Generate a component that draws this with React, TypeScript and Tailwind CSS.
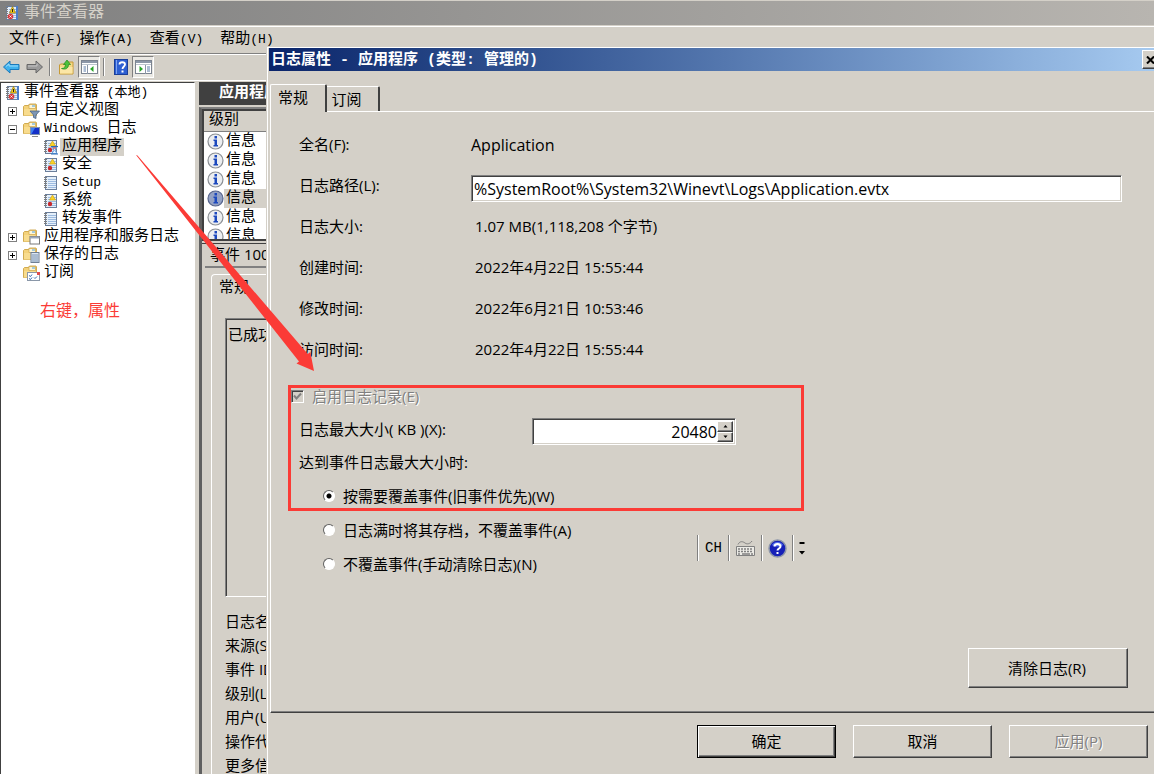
import { useState } from 'react';
import type { ReactNode } from 'react';
import clsx from 'clsx';

const RAISED =
  'border border-t-white border-l-white border-r-[#404040] border-b-[#404040] shadow-[inset_-1px_-1px_0_#808080] bg-[#d4d0c8]';
const SUNKEN =
  'border border-t-[#808080] border-l-[#808080] border-r-white border-b-white shadow-[inset_1px_1px_0_#404040,inset_-1px_-1px_0_#d4d0c8]';
const SONG = "font-['Liberation_Mono','Noto_Sans_CJK_SC',monospace]";
const YAHEI = "font-['Open_Sans','Noto_Sans_CJK_SC',sans-serif]";

type IconKind = 'root' | 'filter' | 'windows' | 'app' | 'alert' | 'plain' | 'services' | 'saved' | 'subscribe';

interface TreeNode {
  label: string;
  latin?: string;
  icon: IconKind;
  level: number;
  expander?: '+' | '-';
}

const tree: TreeNode[] = [
  { label: '事件查看器', latin: ' (本地)', icon: 'root', level: 0 },
  { label: '自定义视图', icon: 'filter', level: 1, expander: '+' },
  { latin: 'Windows ', label: '日志', icon: 'windows', level: 1, expander: '-' },
  { label: '应用程序', icon: 'app', level: 2 },
  { label: '安全', icon: 'alert', level: 2 },
  { latin: 'Setup', label: '', icon: 'plain', level: 2 },
  { label: '系统', icon: 'alert', level: 2 },
  { label: '转发事件', icon: 'plain', level: 2 },
  { label: '应用程序和服务日志', icon: 'services', level: 1, expander: '+' },
  { label: '保存的日志', icon: 'saved', level: 1, expander: '+' },
  { label: '订阅', icon: 'subscribe', level: 1 },
];

const menus = [
  ['文件', '(F)'],
  ['操作', '(A)'],
  ['查看', '(V)'],
  ['帮助', '(H)'],
];

const details = ['日志名称(M):', '来源(S):', '事件 ID(E):', '级别(L):', '用户(U):', '操作代码(O):', '更多信息(I):'];

const overwriteModes = [
  '按需要覆盖事件(旧事件优先)(W)',
  '日志满时将其存档，不覆盖事件(A)',
  '不覆盖事件(手动清除日志)(N)',
];

function NotebookIcon({ kind }: { kind: IconKind }) {
  return (
    <svg width="15" height="16" viewBox="0 0 15 16" className="shrink-0">
      <rect x="2.5" y="1.5" width="11" height="13" fill="#e4effa" stroke="#6b7f9c" />
      {[4, 6, 8, 10, 12].map((y) => (
        <path key={y} d={`M5 ${y + 0.5}h8`} stroke="#9dbbe0" />
      ))}
      {[2, 4, 6, 8, 10, 12].map((y) => (
        <path key={y} d={`M1 ${y + 0.5}h3`} stroke="#7d7d7d" />
      ))}
      {kind === 'root' && (
        <>
          <path d="M13 1v14" stroke="#4b7cc9" strokeWidth="2" />
          <path d="M8.500 1.500l3 6.500h-6z" fill="#f8cf1e" stroke="#a07c00" strokeWidth=".7" />
          <path d="M8.500 4v3" stroke="#222" />
          <circle cx="6.500" cy="11.500" r="2.800" fill="#d8383c" />
          <path d="M5.500 10.500l2 2m0-2l-2 2" stroke="#fff" strokeWidth=".9" />
        </>
      )}
      {(kind === 'alert' || kind === 'app') && (
        <>
          <path d="M9.500 2l3 5h-6z" fill="#fbd426" stroke="#d0a418" strokeWidth=".7" />
          <circle cx="7" cy="11" r="2.200" fill="#c8282c" />
        </>
      )}
      {kind === 'app' && (
        <>
          <path d="M9 8h5l-2 3.200 2 3.300h-5l2-3.300z" fill="#eaf4ff" stroke="#5f9ad8" />
          <path d="M8 7.500h7M8 15h7" stroke="#2f6ab5" />
          <path d="M10 9h3" stroke="#c8282c" />
        </>
      )}
    </svg>
  );
}

function FolderIcon({ kind }: { kind: IconKind }) {
  return (
    <svg width="17" height="16" viewBox="0 0 17 16" className="shrink-0">
      <path d="M.5 3.500l1-1h4l1-1.500h6.500l.500 1v10.500h-13z" fill="#f4d27a" stroke="#c79a35" strokeWidth=".8" />
      <path d="M6 1.500h6.500v4h-6.500z" fill="#fdf6d8" stroke="#cfa64a" strokeWidth=".7" />
      <path d="M9 3h3" stroke="#4a9fe0" />
      <path d="M1 6h11v6.500h-11z" fill="#f8dc8e" />
      {kind === 'filter' && (
        <path d="M7 8h9.500l-3.500 4v3.500l-2.500-1v-2.500z" fill="#7d96b5" stroke="#4b6585" strokeWidth=".8" />
      )}
      {kind === 'windows' && (
        <>
          <rect x="7.500" y="6.500" width="9" height="7" fill="#1430c8" stroke="#7d8fae" />
          <path d="M8 7h4l-3.500 6h-.500z" fill="#3c7df0" />
          <path d="M9 15.500h6" stroke="#8a8a8a" />
        </>
      )}
      {kind === 'services' && (
        <>
          <rect x="7" y="7.500" width="9.500" height="7.500" fill="#fff" stroke="#777" />
          <path d="M7 8.500h9.500" stroke="#9aa7b8" strokeWidth="2" />
        </>
      )}
      {kind === 'saved' && (
        <>
          <rect x="8" y="5.500" width="8" height="10" fill="#dbe6f2" stroke="#6f7f93" />
          <path d="M9 8h6M9 10h6M9 12h6M9 14h6" stroke="#7b93b0" />
        </>
      )}
      {kind === 'subscribe' && (
        <>
          <rect x="4.500" y="7.500" width="12" height="8" fill="#fff" stroke="#8a97a8" />
          <path d="M14 7h3v3h-3z" fill="#e04c4c" />
          <path d="M6 10.500l1.500 1 1.500-2M6 13.500l1.500 1 1.500-2M11 12.500l1 1 2-2" stroke="#3569b0" fill="none" />
        </>
      )}
    </svg>
  );
}

function InfoIcon({ dim }: { dim: boolean }) {
  return (
    <svg width="17" height="17" viewBox="0 0 17 17" className="shrink-0">
      <circle cx="8.500" cy="8.500" r="7.500" fill={dim ? '#94a2c4' : '#eceef0'} stroke={dim ? '#56648c' : '#8b8f94'} strokeWidth="1.200" />
      <rect x="7.500" y="3" width="2.500" height="2.500" fill="#1c49bd" />
      <path d="M6.500 6.500h3.500v5.500h1v1.500h-4.500v-1.500h1v-4h-1z" fill="#1c49bd" />
    </svg>
  );
}

function PaneIcon({ side }: { side: 'left' | 'right' }) {
  return (
    <svg width="17" height="14" viewBox="0 0 17 14">
      <rect x=".500" y=".500" width="16" height="13" fill="#fff" stroke="#7c8490" />
      <path d="M1 2h15" stroke="#8c97a8" strokeWidth="2" />
      <path d="M1 4.500h15" stroke="#bcc4ce" />
      {side === 'left' ? (
        <>
          <path d="M6.500 5v9" stroke="#8c97a8" />
          <path d="M2.500 7h2.500M2.500 9h2.500M2.500 11h2.500" stroke="#5c7ca8" />
          <path d="M12.500 6v6l-3.500-3z" fill="#28a428" />
        </>
      ) : (
        <>
          <path d="M10.500 5v9" stroke="#8c97a8" />
          <path d="M12 7h3M12 9h3M12 11h3" stroke="#5c7ca8" />
          <path d="M4.500 6v6l3.500-3z" fill="#28a428" />
        </>
      )}
    </svg>
  );
}

function ToolButton({ label, pressed, children }: { label: string; pressed?: boolean; children: ReactNode }) {
  return (
    <button
      type="button"
      aria-label={label}
      className={clsx(
        'flex h-[22px] items-center justify-center',
        pressed
          ? 'w-[22px] border border-t-[#808080] border-l-[#808080] border-r-white border-b-white bg-[#eae8e3]'
          : 'w-[23px]',
      )}
    >
      {children}
    </button>
  );
}

function Divider() {
  return <span className="mr-1 ml-[3px] h-[18px] w-[2px] shrink-0 border-l border-[#808080] border-r border-r-white" />;
}

function Toolbar() {
  return (
    <div className="flex h-6 items-center border-t border-white">
      <ToolButton label="后退">
        <svg width="17" height="14" viewBox="0 0 17 14">
          <path d="M.500 7l6.500-6v3.500h9v5h-9v3.500z" fill="#3fb2ee" stroke="#1a78ba" />
          <path d="M3 6.500l3-2.500v2h9" stroke="#9cdcfb" fill="none" />
        </svg>
      </ToolButton>
      <ToolButton label="前进">
        <svg width="17" height="14" viewBox="0 0 17 14">
          <path d="M16.500 7l-6.500-6v3.500h-9v5h9v3.500z" fill="#9a9a9a" stroke="#666" />
          <path d="M2 6h9v-2.500" stroke="#c4c4c4" fill="none" />
        </svg>
      </ToolButton>
      <Divider />
      <ToolButton label="向上">
        <svg width="15" height="16" viewBox="0 0 15 16">
          <path d="M.500 6l1-1h5l1-2h6.500v12h-13.500z" fill="#f6d987" stroke="#c79a35" />
          <path d="M1 8h12.500v6.500h-12.500z" fill="#fbe6a6" />
          <path d="M2.500 9.500c3 0 4-2 4-4h-2l3.500-4.500 3.500 4.500h-2c0 4-3 5.500-7 4z" fill="#4cc23c" stroke="#1f8a1c" strokeWidth=".7" />
        </svg>
      </ToolButton>
      <ToolButton label="显示/隐藏控制台树" pressed>
        <PaneIcon side="left" />
      </ToolButton>
      <Divider />
      <ToolButton label="帮助">
        <svg width="14" height="16" viewBox="0 0 14 16">
          <rect x=".500" y=".500" width="13" height="15" fill="#2d5fd2" stroke="#1b3f98" />
          <path d="M2.500 1v14" stroke="#7fa4f0" />
          <path d="M5.500 5.500c0-3 5.500-3 5.500 0 0 2-2.500 2-2.500 4.500" stroke="#fff" strokeWidth="1.800" fill="none" />
          <rect x="7.500" y="11.500" width="2" height="2" fill="#fff" />
        </svg>
      </ToolButton>
      <ToolButton label="显示/隐藏操作窗格" pressed>
        <PaneIcon side="right" />
      </ToolButton>
    </div>
  );
}

function TreeRow({ node, selected, onSelect }: { node: TreeNode; selected: boolean; onSelect: () => void }) {
  const latin = node.latin && <span className="whitespace-pre text-[13px]">{node.latin}</span>;
  const latinFirst = node.level > 0;
  return (
    <li className={clsx('flex h-[18px] items-center', node.level === 0 && 'pl-1', node.level === 1 && 'pl-[7px]', node.level === 2 && 'pl-[42px]')}>
      {node.level === 1 && (
        <span className="mr-[6px] flex w-[9px] shrink-0">
          {node.expander && (
            <svg width="9" height="9" viewBox="0 0 9 9">
              <rect x=".500" y=".500" width="8" height="8" fill="#fff" stroke="#808080" />
              <path d={node.expander === '+' ? 'M2 4.500h5M4.500 2v5' : 'M2 4.500h5'} stroke="#000" />
            </svg>
          )}
        </span>
      )}
      {node.level === 1 ? <FolderIcon kind={node.icon} /> : <NotebookIcon kind={node.icon} />}
      <button
        type="button"
        onClick={onSelect}
        className={clsx('ml-[2px] h-[18px] px-[2px] text-[15px] leading-[18px] whitespace-nowrap', selected && 'bg-[#d4d0c8]')}
      >
        {latinFirst && latin}
        {node.label}
        {!latinFirst && latin}
      </button>
    </li>
  );
}

function EventPane() {
  return (
    <main className="flex min-w-0 flex-1 flex-col overflow-hidden">
      <h2 className="mb-[2px] h-[23px] shrink-0 bg-[#404040] pl-5 text-[15px] leading-[24px] font-bold text-white">应用程序</h2>
      <div className="flex min-h-0 flex-1 flex-col border-t-2 border-l-3 border-t-[#808080] border-l-[#606060]">
        <div className="h-[132px] shrink-0 overflow-hidden border-2 border-r-0 border-[#404040] bg-white">
          <table className="w-full border-collapse text-left text-[15px]">
            <thead>
              <tr>
                <th className="h-5 border-b border-[#808080] bg-[#d4d0c8] p-0 pl-[5px] leading-[19px] font-normal">级别</th>
              </tr>
            </thead>
            <tbody>
              {[0, 1, 2, 3, 4, 5].map((row) => (
                <tr key={row}>
                  <td className="p-0">
                    <div className="flex h-[19px] items-center pl-[3px] leading-[19px]">
                      <InfoIcon dim={row === 3} />
                      <span className={clsx('flex-1 pl-[2px]', row === 3 && 'bg-[#d4d0c8]')}>信息</span>
                    </div>
                  </td>
                </tr>
              ))}
            </tbody>
          </table>
        </div>
        <div className={clsx('mt-[2px] flex min-h-0 flex-1 flex-col border-t border-[#404040] pl-[3px] text-[15px]', YAHEI)}>
          <h3 className="h-[24px] shrink-0 border-b-2 border-[#808080] pl-[5px] leading-[21px]">事件 1001</h3>
          <div className="mt-[6px] ml-[6px] flex-1 rounded-tl border-t border-l border-white pl-[13px]">
            <div className="-ml-[6px] h-[43px] leading-[22px]">常规</div>
            <div className={clsx('h-[279px] pt-[3px] pl-[2px] leading-[24px]', SUNKEN)}>已成功</div>
            <ul className="mt-3 whitespace-nowrap">
              {details.map((item) => (
                <li key={item} className="h-6 leading-6">{item}</li>
              ))}
            </ul>
          </div>
        </div>
      </div>
    </main>
  );
}

function InfoRow({ label, children }: { label: string; children: ReactNode }) {
  return (
    <div className="flex h-[41px] items-center">
      <dt className="w-[172px] shrink-0">{label}</dt>
      <dd className="min-w-0 flex-1">{children}</dd>
    </div>
  );
}

function SizeSpinner() {
  const [size, setSize] = useState(20480);
  return (
    <div className={clsx('mt-1 flex h-[27px] w-[204px] bg-white p-[2px]', SUNKEN)}>
      <input
        id="max-size"
        value={size}
        onChange={(e) => setSize(Number(e.target.value) || 0)}
        className="min-w-0 flex-1 bg-transparent text-right text-[16px] outline-none"
      />
      <div className="flex w-4 flex-col">
        <button type="button" aria-label="增大" onClick={() => setSize(size + 64)} className={clsx('flex flex-1 items-center justify-center', RAISED)}>
          <svg width="5" height="3" viewBox="0 0 5 3"><path d="M2.500 0l2 2.500h-4z" /></svg>
        </button>
        <button type="button" aria-label="减小" onClick={() => setSize(size - 64)} className={clsx('flex flex-1 items-center justify-center', RAISED)}>
          <svg width="5" height="3" viewBox="0 0 5 3"><path d="M2.500 3l2-2.500h-4z" /></svg>
        </button>
      </div>
    </div>
  );
}

function GeneralTab() {
  const [mode, setMode] = useState(0);
  return (
    <div className="flex min-h-0 flex-1 flex-col border-b border-l border-b-[#404040] border-l-white pt-3 shadow-[inset_0_-1px_0_#808080]">
      <dl className="pr-8 pl-7">
        <InfoRow label="全名(F):"><span className="text-[16px]">Application</span></InfoRow>
        <InfoRow label="日志路径(L):">
          <input
            aria-label="日志路径(L)"
            defaultValue={'%SystemRoot%\\System32\\Winevt\\Logs\\Application.evtx'}
            className={clsx('mt-[6px] block h-[27px] w-full bg-white px-[2px] text-[16px] outline-none', SUNKEN)}
          />
        </InfoRow>
        <InfoRow label="日志大小:"><span className="pl-1">1.07 MB(1,118,208 个字节)</span></InfoRow>
        <InfoRow label="创建时间:"><span className="pl-1">2022年4月22日 15:55:44</span></InfoRow>
        <InfoRow label="修改时间:"><span className="pl-1">2022年6月21日 10:53:46</span></InfoRow>
        <InfoRow label="访问时间:"><span className="pl-1">2022年4月22日 15:55:44</span></InfoRow>
      </dl>

      <div className="pt-[10px] pl-7">
        <label className="-ml-2 flex h-[33px] items-center text-[#808080] [text-shadow:1px_1px_0_#fff]">
          <span className="grid">
            <input type="checkbox" checked disabled readOnly className={clsx('col-start-1 row-start-1 h-[13px] w-[13px] appearance-none', SUNKEN)} />
            <svg width="13" height="13" viewBox="0 0 13 13" className="col-start-1 row-start-1">
              <path d="M3 5.500l2.500 3 4.500-5" stroke="#808080" strokeWidth="2" fill="none" />
            </svg>
          </span>
          <span className="pl-2">启用日志记录(E)</span>
        </label>
        <div className="flex h-[33px] items-center">
          <label htmlFor="max-size" className="w-[233px]">日志最大大小( KB )(X):</label>
          <SizeSpinner />
        </div>
        <fieldset>
          <legend className="h-[33px] leading-[33px]">达到事件日志最大大小时:</legend>
          {overwriteModes.map((text, i) => (
            <label key={text} className="flex h-[34px] w-max items-center pl-6">
              <input
                type="radio"
                name="overwrite"
                checked={mode === i}
                onChange={() => setMode(i)}
                className="h-3 w-3 appearance-none rounded-full border border-t-[#606060] border-r-white border-b-white border-l-[#606060] bg-white checked:bg-[radial-gradient(circle,#000_2px,#fff_3px)]"
              />
              <span className="pl-2">{text}</span>
            </label>
          ))}
        </fieldset>
      </div>

      <button type="button" className={clsx('mt-auto mr-[26px] mb-6 h-10 w-40 shrink-0 self-end pr-[2px]', RAISED)}>清除日志(R)</button>
    </div>
  );
}

function PropertiesDialog() {
  return (
    <section
      role="dialog"
      aria-label="日志属性"
      className={clsx('absolute top-[46px] right-0 bottom-0 left-[266px] flex flex-col overflow-hidden border-t border-l border-[#d4d0c8] bg-[#d4d0c8] text-[15px]', YAHEI)}
    >
      <div className="flex flex-1 flex-col border-t border-l border-white">
        <header className="ml-px flex h-[23px] items-center justify-between bg-linear-to-r from-[#0a246a] to-[#a6caf0] pl-[2px]">
          <h1 className={clsx('pt-[3px] text-[15px] leading-5 font-bold text-white', SONG)}>日志属性 - 应用程序 (类型: 管理的)</h1>
          <button type="button" aria-label="关闭" className={clsx('-mr-1 flex h-[19px] w-4 items-center justify-center', RAISED)}>
            <svg width="9" height="8" viewBox="0 0 9 8" className="shrink-0"><path d="M1 .500l7 7M8 .500l-7 7" stroke="#000" strokeWidth="2" /></svg>
          </button>
        </header>
        <div className="ml-[2px] flex items-end pt-[13px]" role="tablist">
          <button type="button" role="tab" aria-selected="true" className="h-7 w-[57px] rounded-t-[2px] border border-r-2 border-b-0 border-white border-r-[#404040] pr-[10px] pb-1 leading-[22px]">常规</button>
          <div className="flex flex-1 items-end border-b border-white">
            <button type="button" role="tab" aria-selected="false" className="h-[25px] w-[53px] rounded-tr-[2px] border-t border-r-2 border-t-white border-r-[#404040] pr-3 leading-[22px]">订阅</button>
          </div>
        </div>
        <div className="ml-[2px] flex min-h-0 flex-1 flex-col">
          <GeneralTab />
        </div>
        <footer className="flex h-[61px] shrink-0 items-start justify-end gap-[17px] pt-3 pr-[6px]">
          <button type="button" className="h-[33px] w-[139px] border border-black shadow-[inset_1px_1px_0_#fff,inset_-1px_-1px_0_#404040,inset_-2px_-2px_0_#808080]">确定</button>
          <button type="button" className={clsx('h-[33px] w-[139px]', RAISED)}>取消</button>
          <button type="button" disabled className={clsx('h-[33px] w-[139px] text-[#808080] [text-shadow:1px_1px_0_#fff]', RAISED)}>应用(P)</button>
        </footer>
      </div>
    </section>
  );
}

function LanguageBar() {
  const line = 'h-[26px] w-[2px] border-l border-l-[#808080] border-r border-r-white';
  return (
    <div className={clsx('absolute top-[535px] left-[697px] flex items-center bg-[#d4d0c8]', SONG)}>
      <span className={line} />
      <button type="button" className="w-[29px] text-[14px]">CH</button>
      <span className={line} />
      <button type="button" aria-label="键盘" className="flex w-[31px] justify-center">
        <svg width="21" height="17" viewBox="0 0 21 17" fill="none" stroke="#808080">
          <path d="M3 4.500c2-4 5-3 7-1.500s5 1 7-2" />
          <path d="M1.500 6.500h18v9h-18z" fill="#ecebe6" />
          <path d="M3 9h15M3 11.500h15" strokeWidth="1.500" strokeDasharray="2 1" />
          <path d="M3 14h2M7 14h8M16 14h2" strokeWidth="1.500" />
        </svg>
      </button>
      <span className={line} />
      <button type="button" aria-label="帮助" className="flex w-[29px] justify-center">
        <svg width="19" height="19" viewBox="0 0 19 19">
          <circle cx="9.500" cy="9.500" r="8.500" fill="#1620b8" stroke="#8d96a8" strokeWidth="1.500" />
          <path d="M4 6a6.500 6.500 0 0 1 11 0c-3 2-8 2-11 0z" fill="#5a78ee" />
          <path d="M6.500 7.500c0-3.500 6-3.500 6 0 0 2-3 2-3 4" stroke="#fff" strokeWidth="2" fill="none" />
          <rect x="8.500" y="13" width="2" height="2" fill="#fff" />
        </svg>
      </button>
      <span className={line} />
      <button type="button" aria-label="选项" className="flex w-4 justify-center">
        <svg width="6" height="14" viewBox="0 0 6 14"><path d="M.500 1h5v2h-5zM0 10h6l-3 3.500z" /></svg>
      </button>
    </div>
  );
}

export default function App() {
  const [selected, setSelected] = useState('应用程序');

  return (
    <div className={clsx('relative flex h-screen flex-col overflow-hidden bg-[#d4d0c8] text-black', SONG)}>
      <header className="mt-px flex h-6 shrink-0 items-center gap-[5px] bg-linear-to-r from-[#808080] to-[#b8b5b0] pl-1 text-[#d4d0c8]">
        <NotebookIcon kind="root" />
        <h1 className="text-[16px] leading-6">事件查看器</h1>
      </header>
      <nav className="mt-px flex h-7 shrink-0 items-center gap-[17px] border-t border-b border-t-white border-b-[#808080] pl-[9px] text-[15px]">
        {menus.map(([label, key]) => (
          <button type="button" key={key} className="whitespace-nowrap">
            {label}
            <span className="text-[13px]">{key}</span>
          </button>
        ))}
      </nav>
      <Toolbar />

      <div className="mt-[2px] flex min-h-0 flex-1 gap-1 border-t border-white pt-px">
        <aside className="w-[195px] shrink-0 border border-t-[#404040] border-r-white border-b-0 border-l-[#404040] bg-white">
          <ul className="pt-px">
            {tree.map((node) => (
              <TreeRow
                key={(node.latin || '') + node.label}
                node={node}
                selected={selected === node.label}
                onSelect={() => setSelected(node.label)}
              />
            ))}
          </ul>
        </aside>
        <EventPane />
      </div>

      <PropertiesDialog />
      <LanguageBar />

      {/* Callouts */}
      <p className="absolute top-[297px] left-10 font-['Noto_Sans_CJK_SC',sans-serif] text-[16px] leading-6 text-[#fb3b36]">右键，属性</p>
      <div className="pointer-events-none absolute top-[385px] left-[288px] h-[126px] w-[516px] border-3 border-[#fb3b36]" />
      <svg width="320" height="380" viewBox="0 0 320 380" className="pointer-events-none absolute top-0 left-0">
        <path d="M136 155l1.500.500L307.800 354.100l2.500-2 3.700 19-17.500-7.500 2.500-2z" fill="#fb3b36" />
      </svg>
    </div>
  );
}
